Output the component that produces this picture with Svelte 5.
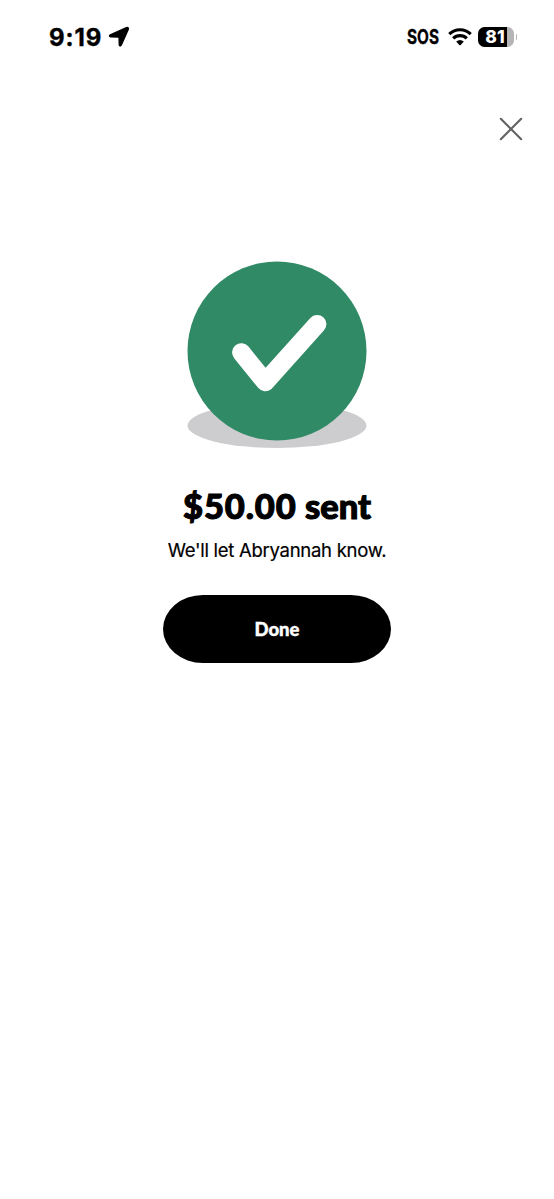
<script lang="ts">
  let time: string = '9:19';
  let battery: number = 81;
  let amount: string = '$50.00';
  let recipient: string = 'Abryannah';
</script>

<div class="screen">
  <header class="status">
    <div class="left">
      <span class="time">{time}</span>
      <svg class="location" width="22" height="22" viewBox="0 0 22 22">
        <path d="M2.3 8.8 18.4 1.7Q20.9.9 20.2 3.4L13.2 19.2Q12 20.8 11.3 18.9L11.1 11.8Q11.1 11.1 10.4 11.1L2.6 10.9Q.5 10.2 2.3 8.8Z" />
      </svg>
    </div>
    <div class="right">
      <span class="sos">SOS</span>
      <svg class="wifi" width="24" height="18" viewBox="0 0 24 18">
        <path d="M1.3 6.1C7.2.3 16.8.3 22.7 6.1" />
        <path d="M5.2 10.3C9 6.6 15 6.6 18.8 10.3" />
        <path class="dot" d="M8.2 13.4Q12 10.4 15.8 13.4L12.7 16.9Q12 17.6 11.3 16.9Z" />
      </svg>
      <div class="battery">
        <span>{battery}</span>
      </div>
      <i class="cap"></i>
    </div>
  </header>

  <div class="toolbar">
    <button class="close" aria-label="Close">
      <svg width="24" height="24" viewBox="0 0 24 24">
        <path d="M1.8 1.8 22.2 22.2M22.2 1.8 1.8 22.2" />
      </svg>
    </button>
  </div>

  <main>
    <svg class="check" width="180" height="188" viewBox="0 0 180 188">
      <ellipse cx="90" cy="164.5" rx="89.5" ry="22.5" />
      <circle cx="90" cy="90" r="89.5" />
      <path d="M54.3 91.4 78.3 121 130.2 63.2" />
    </svg>
    <h1><span>{amount}</span> sent</h1>
    <p>We'll let {recipient} know.</p>
    <button class="done">Done</button>
  </main>
</div>

<style>
  :global(body) {
    margin: 0;
    background: #fff;
  }

  .screen {
    box-sizing: border-box;
    height: 1199px;
    color: #000;
    background: #fff;
    font-family: Inter, sans-serif;
    overflow: hidden;
  }

  .status {
    box-sizing: border-box;
    display: flex;
    justify-content: space-between;
    height: 74px;
    padding: 0 37px 0 49px;
  }

  .left,
  .right {
    display: flex;
    align-items: center;
  }

  .time {
    width: 53px;
    padding-top: 2px;
    font-size: 24px;
    font-weight: 700;
    line-height: 28px;
    letter-spacing: .9px;
    white-space: nowrap;
    -webkit-text-stroke: .4px #000;
  }

  .location {
    margin-left: 6px;
    stroke: #000;
    stroke-width: 1.4;
    stroke-linejoin: round;
  }

  .sos {
    width: 33px;
    font-size: 20px;
    font-weight: 700;
    line-height: 24px;
    transform: scaleX(.77);
    transform-origin: left;
    -webkit-text-stroke: .3px #000;
  }

  .wifi {
    margin-left: 8px;
    fill: none;
    stroke: #000;
    stroke-width: 3.2;
  }
  .wifi .dot {
    fill: #000;
    stroke: none;
  }

  .battery {
    display: flex;
    align-items: center;
    justify-content: center;
    width: 36px;
    height: 20px;
    margin-left: 6px;
    border-radius: 6.5px;
    color: #fff;
    background: linear-gradient(to right, #000 29px, #b5b5b7 29px);
    font-size: 17.5px;
    font-weight: 800;
    line-height: 20px;
  }
  .battery span {
    margin-right: 2px;
  }

  .cap {
    width: 1.5px;
    height: 6px;
    margin-left: 1.5px;
    border-radius: 0 3px 3px 0;
    background: #b5b5b7;
  }

  .toolbar {
    display: flex;
    justify-content: flex-end;
    padding: 43px 31px 0 0;
  }

  button {
    padding: 0;
    border: 0;
    cursor: pointer;
  }

  .close {
    display: block;
    height: 24px;
    background: none;
  }
  .close svg {
    display: block;
    fill: none;
    stroke: #626264;
    stroke-width: 2.1;
    stroke-linecap: round;
  }

  main {
    display: flex;
    flex-direction: column;
    align-items: center;
    padding-top: 120px;
  }

  .check ellipse {
    fill: #cdcdd0;
  }
  .check circle {
    fill: #318a66;
  }
  .check path {
    fill: none;
    stroke: #fff;
    stroke-width: 18.4;
    stroke-linecap: round;
    stroke-linejoin: round;
  }

  h1 {
    margin: 36px 0 0;
    font-family: Lato, sans-serif;
    font-size: 34.5px;
    font-weight: 900;
    line-height: 42px;
    white-space: nowrap;
    -webkit-text-stroke: 1.1px #000;
  }
  h1 span {
    letter-spacing: .9px;
  }

  p {
    margin: 11px 0 0;
    font-size: 18.5px;
    line-height: 24px;
    letter-spacing: -.28px;
    white-space: nowrap;
    -webkit-text-stroke: .2px #000;
  }

  .done {
    width: 228px;
    height: 68px;
    margin-top: 33px;
    border-radius: 40px / 34px;
    color: #fff;
    background: #000;
    font-family: Lato, sans-serif;
    font-size: 18.5px;
    font-weight: 900;
    -webkit-text-stroke: .4px #fff;
  }
</style>
